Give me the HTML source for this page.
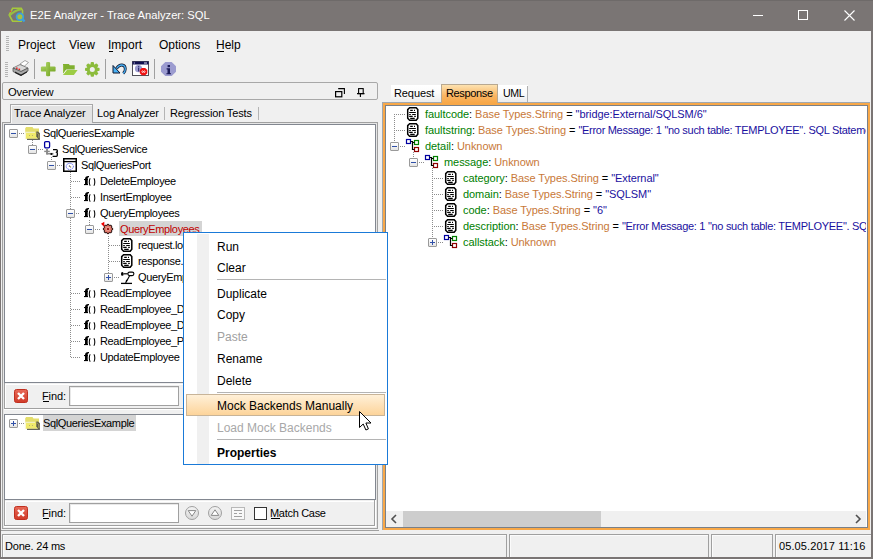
<!DOCTYPE html>
<html><head><meta charset="utf-8">
<style>
*{margin:0;padding:0;box-sizing:border-box}
html,body{width:873px;height:559px;overflow:hidden;background:#f0f0f0;font-family:"Liberation Sans",sans-serif;color:#000;position:relative}
.a{position:absolute}
.t{position:absolute;white-space:pre;line-height:1}
svg{position:absolute;overflow:visible}
.dh{position:absolute;height:1px;background:repeating-linear-gradient(to right,#8c8c8c 0 1px,transparent 1px 2px)}
.dv{position:absolute;width:1px;background:repeating-linear-gradient(to bottom,#8c8c8c 0 1px,transparent 1px 2px)}
.ex{position:absolute;width:9px;height:9px;border:1px solid #9a9a9a;border-radius:1px;background:linear-gradient(#ffffff,#e4e4e4)}
.ex:before{content:"";position:absolute;left:1px;top:3px;width:5px;height:1px;background:#3050a8}
.ex.p:after{content:"";position:absolute;left:3px;top:1px;width:1px;height:5px;background:#3050a8}
</style></head><body>

<div class="a" style="left:0px;top:0px;width:873px;height:31px;background:#7a7574"></div>
<div class="a" style="left:0px;top:0px;width:873px;height:1px;background:#6e6a69"></div>
<svg style="left:8px;top:7px;" width="18" height="16" viewBox="0 0 18 16"><path d="M4.6 1.3 H13.2 L14.5 3.5 V12 L13.2 14.2 H4.6 L1.2 8 Z" fill="none" stroke="#a6c83c" stroke-width="1.6"/>
<path d="M1.6 8.6 Q7 3 13 2.5" fill="none" stroke="#98c040" stroke-width="1.8"/>
<circle cx="2.5" cy="4.4" r="0.8" fill="#e04040"/>
<circle cx="11.9" cy="9.7" r="3.4" fill="#a8c040" stroke="#3aa0e0" stroke-width="1.7"/>
<path d="M14.3 12.1 L16.6 14.4" stroke="#3aa0e0" stroke-width="2.2"/></svg>
<div class="t" style="left:30px;top:10px;font-size:11.2px;color:#fff;letter-spacing:0px;">E2E Analyzer - Trace Analyzer: SQL</div>
<div class="a" style="left:753px;top:15px;width:10px;height:1px;background:#fff"></div>
<div class="a" style="left:798px;top:10px;width:10px;height:10px;border:1px solid #fff"></div>
<svg style="left:844px;top:10px;" width="11" height="11" viewBox="0 0 11 11"><path d="M0.5 0.5L10.5 10.5M10.5 0.5L0.5 10.5" stroke="#fff" stroke-width="1.1"/></svg>
<div class="a" style="left:0px;top:31px;width:1px;height:528px;background:#7a7574"></div>
<div class="a" style="left:871px;top:31px;width:2px;height:528px;background:#7a7574"></div>
<div class="a" style="left:0px;top:557px;width:873px;height:2px;background:#7a7574"></div>
<div class="a" style="left:6px;top:36px;width:3px;height:1px;background:#b4b4b4"></div>
<div class="a" style="left:6px;top:38px;width:3px;height:1px;background:#b4b4b4"></div>
<div class="a" style="left:6px;top:40px;width:3px;height:1px;background:#b4b4b4"></div>
<div class="a" style="left:6px;top:42px;width:3px;height:1px;background:#b4b4b4"></div>
<div class="a" style="left:6px;top:44px;width:3px;height:1px;background:#b4b4b4"></div>
<div class="a" style="left:6px;top:46px;width:3px;height:1px;background:#b4b4b4"></div>
<div class="a" style="left:6px;top:48px;width:3px;height:1px;background:#b4b4b4"></div>
<div class="a" style="left:6px;top:50px;width:3px;height:1px;background:#b4b4b4"></div>
<div class="t" style="left:18px;top:39px;font-size:12px;color:#000;letter-spacing:0px;">Project</div>
<div class="t" style="left:69px;top:39px;font-size:12px;color:#000;letter-spacing:0px;">View</div>
<div class="t" style="left:108px;top:39px;font-size:12px;color:#000;letter-spacing:0px;">Import</div>
<div class="t" style="left:159px;top:39px;font-size:12px;color:#000;letter-spacing:0px;">Options</div>
<div class="t" style="left:216px;top:39px;font-size:12px;color:#000;letter-spacing:0px;">Help</div>
<div class="a" style="left:109px;top:51px;width:4px;height:1px;background:#000"></div>
<div class="a" style="left:217px;top:51px;width:7px;height:1px;background:#000"></div>
<div class="a" style="left:5px;top:62px;width:3px;height:1px;background:#b4b4b4"></div>
<div class="a" style="left:5px;top:64px;width:3px;height:1px;background:#b4b4b4"></div>
<div class="a" style="left:5px;top:66px;width:3px;height:1px;background:#b4b4b4"></div>
<div class="a" style="left:5px;top:68px;width:3px;height:1px;background:#b4b4b4"></div>
<div class="a" style="left:5px;top:70px;width:3px;height:1px;background:#b4b4b4"></div>
<div class="a" style="left:5px;top:72px;width:3px;height:1px;background:#b4b4b4"></div>
<div class="a" style="left:5px;top:74px;width:3px;height:1px;background:#b4b4b4"></div>
<div class="a" style="left:5px;top:76px;width:3px;height:1px;background:#b4b4b4"></div>
<svg style="left:12px;top:60px;" width="17" height="17" viewBox="0 0 17 17"><path d="M8 4 L13 0.5 L16.5 2.5 L12 6.5 Z" fill="#fff" stroke="#909090" stroke-width="0.8"/>
<path d="M1 8 L8 4.5 L16 8 L9 11.5 Z" fill="#d8d8d8" stroke="#707070" stroke-width="0.8"/>
<path d="M1 8 L9 11.5 L16 8 L16 11 L9 15.5 L1 11.5 Z" fill="#a8a8a8" stroke="#505050" stroke-width="0.8"/>
<path d="M3 11.5 L9 14.5 L15 11.2 L15 12.5 L9 16 L3 13 Z" fill="#202020"/>
<rect x="4" y="7.5" width="1.6" height="1.4" fill="#e82020"/><rect x="6.5" y="8.6" width="1.6" height="1.4" fill="#e82020"/></svg>
<div class="a" style="left:34px;top:59px;width:1px;height:20px;background:#a0a0a0"></div>
<svg style="left:40px;top:62px;" width="16" height="15" viewBox="0 0 16 15"><defs><linearGradient id="gg" x1="0" y1="0" x2="1" y2="1"><stop offset="0" stop-color="#a8d060"/><stop offset="1" stop-color="#78a828"/></linearGradient></defs><rect x="0.9" y="4.4" width="14.7" height="5.2" rx="1.2" fill="url(#gg)"/><rect x="6" y="0" width="4.1" height="14.3" rx="1.2" fill="url(#gg)"/></svg>
<svg style="left:62px;top:63px;" width="17" height="13" viewBox="0 0 17 13"><path d="M1 1 H6.8 L7.8 2.3 H12.7 V6.5 H4.2 L1 10.8 Z" fill="#80b030"/><path d="M1.6 2 V10" stroke="#98c048" stroke-width="1"/><path d="M0.9 11.9 L4.6 7.1 H15.6 L11.9 11.9 Z" fill="#9ccc44"/><path d="M1.2 11.2 L4.4 7.2" stroke="#f4f8e8" stroke-width="0.8"/></svg>
<svg style="left:85px;top:62px;" width="15" height="15" viewBox="0 0 15 15"><g transform="translate(7.3 7.4)" fill="#8cbc3c"><rect x="-1.7" y="-7.3" width="3.4" height="14.6" rx="1"/><rect x="-1.7" y="-7.3" width="3.4" height="14.6" rx="1" transform="rotate(45)"/><rect x="-1.7" y="-7.3" width="3.4" height="14.6" rx="1" transform="rotate(90)"/><rect x="-1.7" y="-7.3" width="3.4" height="14.6" rx="1" transform="rotate(135)"/><circle r="5.5"/><circle r="2.5" fill="#f0f0f0"/></g></svg>
<div class="a" style="left:105px;top:59px;width:1px;height:20px;background:#a0a0a0"></div>
<svg style="left:112px;top:63px;" width="15" height="12" viewBox="0 0 15 12"><path d="M4.5 5.5 Q7 1.8 10 2 Q13.3 2.4 13.3 6 Q13.3 8.8 11.2 10.4" fill="none" stroke="#101830" stroke-width="2.8"/><path d="M4.5 5.5 Q7 1.8 10 2 Q13.3 2.4 13.3 6 Q13.3 8.8 11.2 10.4" fill="none" stroke="#48b0f4" stroke-width="1.3"/><path d="M1 2.5 L1 10 L8 10 Z" fill="#48b0f4" stroke="#101830" stroke-width="1"/></svg>
<svg style="left:132px;top:61px;" width="17" height="15" viewBox="0 0 17 15"><rect x="0.5" y="0.5" width="16" height="14" fill="#fff" stroke="#505058" stroke-width="1"/><rect x="0.5" y="0.5" width="16" height="3" fill="#101050"/><rect x="12" y="1.5" width="3" height="1" fill="#e0e0f0"/><rect x="1.8" y="1.5" width="1" height="1" fill="#e0e0f0"/><circle cx="6.5" cy="7.7" r="3.6" fill="#9c9cd0"/><rect x="6" y="5.2" width="1.2" height="1.1" fill="#303070"/><rect x="6" y="6.8" width="1.2" height="3.6" fill="#303070"/><path d="M7.8 9.1 L9.8 7 H13.2 L15.3 9.1 V12.3 L13.2 14.3 H9.8 L7.8 12.3 Z" fill="#f01010"/><path d="M9.7 10.7 Q10.6 9.2 11.5 10.7 Q12.4 12.2 13.3 10.7 Q12.4 9.2 11.5 10.7 Q10.6 12.2 9.7 10.7 Z" fill="none" stroke="#fff" stroke-width="0.9"/></svg>
<div class="a" style="left:154px;top:59px;width:1px;height:20px;background:#a0a0a0"></div>
<svg style="left:161px;top:62px;" width="15" height="14" viewBox="0 0 15 14"><path d="M4.3 0 H10.7 L15 4.2 V9.8 L10.7 14 H4.3 L0 9.8 V4.2 Z" fill="#9c9cd0"/><rect x="6.6" y="3" width="2.4" height="2.2" fill="#1c1c58"/><path d="M5.6 6.3 H9 V11.2 H10 V12.3 H5.4 V11.2 H6.5 V7.4 H5.6 Z" fill="#1c1c58"/></svg>
<div class="a" style="left:2px;top:82px;width:376px;height:18px;border:1px solid #a8a8a8;border-radius:2px;background:#f0f0f0"></div>
<div class="t" style="left:8px;top:87px;font-size:11.2px;color:#000;letter-spacing:-0.15px;">Overview</div>
<svg style="left:335px;top:88px;" width="11" height="10" viewBox="0 0 11 10"><rect x="0.6" y="3.6" width="6.2" height="5.2" fill="none" stroke="#000" stroke-width="1.2"/><path d="M3.2 0.6 H9.4 V5.9" fill="none" stroke="#000" stroke-width="1.1"/></svg>
<svg style="left:357px;top:88px;" width="8" height="10" viewBox="0 0 8 10"><rect x="1.6" y="0.6" width="4.6" height="5" fill="none" stroke="#000" stroke-width="1.1"/><path d="M0 5.6 H7.5 M3.4 5.6 V9" stroke="#000" stroke-width="1.1"/></svg>
<div class="t" style="left:97px;top:108px;font-size:11px;color:#000;letter-spacing:-0.15px;">Log Analyzer</div>
<div class="a" style="left:164px;top:107px;width:1px;height:13px;background:#b4b4b4"></div>
<div class="t" style="left:170px;top:108px;font-size:11px;color:#000;letter-spacing:-0.15px;">Regression Tests</div>
<div class="a" style="left:258px;top:107px;width:1px;height:13px;background:#b4b4b4"></div>
<div class="a" style="left:2px;top:122px;width:376px;height:407px;border:1px solid #a0a0a0;border-bottom:none"></div>
<div class="a" style="left:3px;top:123px;width:374px;height:405px;border:1px solid #e6e6e6;border-bottom:none"></div>
<div class="a" style="left:10px;top:104px;width:83px;height:19px;background:#e3e3e3;border:1px solid #a8a8a8;border-bottom:none;box-shadow:inset 1px 1px 0 #f8f8f8"></div>
<div class="t" style="left:14px;top:108px;font-size:11px;color:#000;letter-spacing:-0.1px;">Trace Analyzer</div>
<div class="a" style="left:4px;top:124px;width:372px;height:259px;border:1px solid #828790;background:#fff"></div>
<div class="ex" style="left:9px;top:129px"></div>
<div class="dh" style="left:19px;top:133px;width:5px"></div>
<svg style="left:24px;top:127px;" width="16" height="13" viewBox="0 0 16 13"><path d="M1.2 1.2 L2.2 0 H8.5 L9.5 1.4 H15 V6 H1.2 Z" fill="#e4de6c"/><path d="M1.6 5.7 H15.2 V11.8 H1.6 Z" fill="#f0ea6c"/><rect x="1.2" y="4.8" width="9.8" height="0.9" fill="#f6f6e4"/><path d="M1.3 5.5 V11" stroke="#fafae0" stroke-width="0.8"/><path d="M12.3 4.4 H14 L15.9 6.2 V11.9 H14.2 L12.3 9.6 Z" fill="#5e5c4c"/><path d="M13.2 6 L14.8 7.6 V11" stroke="#d8d070" stroke-width="0.6" fill="none"/><rect x="3" y="11.8" width="12.9" height="1.1" fill="#55554a"/><path d="M5 8.5 h1 M8 8.5 h1" stroke="#b8b070" stroke-width="1"/></svg>
<div class="t" style="left:43px;top:128px;font-size:11px;letter-spacing:-0.35px;color:#000">SqlQueriesExample</div>
<div class="dv" style="left:32px;top:140px;height:5px"></div>
<div class="ex" style="left:28px;top:145px"></div>
<div class="dh" style="left:38px;top:149px;width:5px"></div>
<svg style="left:43px;top:141px;" width="16" height="17" viewBox="0 0 16 17"><rect x="1.6" y="0.6" width="5" height="6.2" rx="1.2" fill="none" stroke="#0000a0" stroke-width="1.3"/><path d="M1.2 10.4 H6.8" stroke="#8a8a8a" stroke-width="1.4"/><path d="M4 8 V13.5" stroke="#8a8a8a" stroke-width="1.9"/><path d="M3.5 12.7 H10.5" stroke="#8a8a8a" stroke-width="1.6"/><circle cx="8.4" cy="13" r="1.1" fill="#000"/><path d="M10 8.6 H13.3 Q14.3 8.6 14.3 9.6 V10.6 L13.5 11.2 L14.3 11.8 V14.3 Q14.3 15.3 13.3 15.3 H9.6" stroke="#000" stroke-width="1.3" fill="none"/></svg>
<div class="t" style="left:62px;top:144px;font-size:11px;letter-spacing:-0.35px;color:#000">SqlQueriesService</div>
<div class="dv" style="left:51px;top:157px;height:4px"></div>
<div class="ex" style="left:47px;top:161px"></div>
<div class="dh" style="left:57px;top:165px;width:5px"></div>
<svg style="left:63px;top:158px;" width="14" height="14" viewBox="0 0 14 14"><rect x="0.75" y="0.75" width="12.5" height="12.5" fill="#fff" stroke="#000" stroke-width="1.5"/><path d="M1 3.6 H13" stroke="#000" stroke-width="1.3"/><ellipse cx="6.8" cy="8.4" rx="3.6" ry="3.1" fill="none" stroke="#4858f0" stroke-width="1" stroke-dasharray="1.2 0.8"/><circle cx="6.4" cy="8" r="0.6" fill="#000"/><circle cx="7.6" cy="8.9" r="0.6" fill="#707030"/></svg>
<div class="t" style="left:81px;top:160px;font-size:11px;letter-spacing:-0.35px;color:#000">SqlQueriesPort</div>
<div class="dv" style="left:70px;top:172px;height:186px"></div>
<div class="dh" style="left:71px;top:181px;width:9px"></div>
<svg style="left:84px;top:176px;" width="12" height="10" viewBox="0 0 12 10"><path d="M1 9 V3 Q1 0 4.5 0 H5 V1.2 H4.3 Q3.7 1.2 3.7 3 V9 Z" fill="#000"/><rect x="0" y="3" width="3.8" height="1.1" fill="#000"/><rect x="0" y="8" width="4" height="1.1" fill="#000"/><path d="M6.2 2.3 Q5.3 3.5 5.3 6 Q5.3 8.5 6.2 9.7 M9.9 2.3 Q10.8 3.5 10.8 6 Q10.8 8.5 9.9 9.7" fill="none" stroke="#000" stroke-width="1.05"/></svg>
<div class="t" style="left:100px;top:176px;font-size:11px;letter-spacing:-0.35px;color:#000">DeleteEmployee</div>
<div class="dh" style="left:71px;top:197px;width:9px"></div>
<svg style="left:84px;top:192px;" width="12" height="10" viewBox="0 0 12 10"><path d="M1 9 V3 Q1 0 4.5 0 H5 V1.2 H4.3 Q3.7 1.2 3.7 3 V9 Z" fill="#000"/><rect x="0" y="3" width="3.8" height="1.1" fill="#000"/><rect x="0" y="8" width="4" height="1.1" fill="#000"/><path d="M6.2 2.3 Q5.3 3.5 5.3 6 Q5.3 8.5 6.2 9.7 M9.9 2.3 Q10.8 3.5 10.8 6 Q10.8 8.5 9.9 9.7" fill="none" stroke="#000" stroke-width="1.05"/></svg>
<div class="t" style="left:100px;top:192px;font-size:11px;letter-spacing:-0.35px;color:#000">InsertEmployee</div>
<div class="ex" style="left:66px;top:209px"></div>
<div class="dh" style="left:76px;top:213px;width:4px"></div>
<svg style="left:84px;top:208px;" width="12" height="10" viewBox="0 0 12 10"><path d="M1 9 V3 Q1 0 4.5 0 H5 V1.2 H4.3 Q3.7 1.2 3.7 3 V9 Z" fill="#000"/><rect x="0" y="3" width="3.8" height="1.1" fill="#000"/><rect x="0" y="8" width="4" height="1.1" fill="#000"/><path d="M6.2 2.3 Q5.3 3.5 5.3 6 Q5.3 8.5 6.2 9.7 M9.9 2.3 Q10.8 3.5 10.8 6 Q10.8 8.5 9.9 9.7" fill="none" stroke="#000" stroke-width="1.05"/></svg>
<div class="t" style="left:100px;top:208px;font-size:11px;letter-spacing:-0.35px;color:#000">QueryEmployees</div>
<div class="dv" style="left:89px;top:220px;height:5px"></div>
<div class="ex" style="left:85px;top:225px"></div>
<div class="dh" style="left:95px;top:229px;width:5px"></div>
<div class="a" style="left:119px;top:221px;width:83px;height:15px;background:#d4d4d4"></div>
<svg style="left:101px;top:221px;" width="13" height="14" viewBox="0 0 13 14"><g transform="translate(7 8)"><g fill="#1a0808"><rect x="-1.2" y="-5.1" width="2.4" height="10.2"/><rect x="-1.2" y="-5.1" width="2.4" height="10.2" transform="rotate(45)"/><rect x="-1.2" y="-5.1" width="2.4" height="10.2" transform="rotate(90)"/><rect x="-1.2" y="-5.1" width="2.4" height="10.2" transform="rotate(135)"/></g><circle r="4.3" fill="#1a0808"/><circle r="3.5" fill="#e0786a"/><g fill="#e0786a"><rect x="-0.6" y="-4.3" width="1.2" height="8.6"/><rect x="-0.6" y="-4.3" width="1.2" height="8.6" transform="rotate(45)"/><rect x="-0.6" y="-4.3" width="1.2" height="8.6" transform="rotate(90)"/><rect x="-0.6" y="-4.3" width="1.2" height="8.6" transform="rotate(135)"/></g><circle r="2.2" fill="#e8988a"/><circle r="1.1" fill="#900000"/></g><path d="M0 2.8 L3.3 0.7 L3.3 6 Z" fill="#f00000"/></svg>
<div class="t" style="left:120px;top:224px;font-size:11px;letter-spacing:-0.35px;color:#c00000">QueryEmployees</div>
<div class="dv" style="left:108px;top:236px;height:37px"></div>
<div class="dh" style="left:109px;top:245px;width:11px"></div>
<svg style="left:121px;top:238px;" width="12" height="14" viewBox="0 0 12 14"><path d="M2.6 0.8 H9.2 L10.8 2.6 V11.3 L9.2 13.2 H2.6 L0.7 11.3 V2.6 Z" fill="#fff" stroke="#000" stroke-width="1.5"/><path d="M3.2 3.4 H5.8 M7 3.4 H8 M2.2 5.5 H8.8 M2.2 7.5 H3.8 M5.2 7.5 H8.8 M2.2 9.45 H5.7 M7.2 9.45 H8.8 M3.2 11.4 H7.7" stroke="#000" stroke-width="1.2"/></svg>
<div class="t" style="left:138px;top:240px;font-size:11px;letter-spacing:-0.35px;color:#000">request.log</div>
<div class="dh" style="left:109px;top:261px;width:11px"></div>
<svg style="left:121px;top:254px;" width="12" height="14" viewBox="0 0 12 14"><path d="M2.6 0.8 H9.2 L10.8 2.6 V11.3 L9.2 13.2 H2.6 L0.7 11.3 V2.6 Z" fill="#fff" stroke="#000" stroke-width="1.5"/><path d="M3.2 3.4 H5.8 M7 3.4 H8 M2.2 5.5 H8.8 M2.2 7.5 H3.8 M5.2 7.5 H8.8 M2.2 9.45 H5.7 M7.2 9.45 H8.8 M3.2 11.4 H7.7" stroke="#000" stroke-width="1.2"/></svg>
<div class="t" style="left:138px;top:256px;font-size:11px;letter-spacing:-0.35px;color:#000">response.log</div>
<div class="ex p" style="left:104px;top:273px"></div>
<div class="dh" style="left:114px;top:277px;width:6px"></div>
<svg style="left:121px;top:271px;" width="14" height="14" viewBox="0 0 14 14"><ellipse cx="1.3" cy="2.9" rx="1.3" ry="1.9" fill="#000"/><path d="M2.5 2.8 H6.8" stroke="#000" stroke-width="1.2"/><rect x="6.9" y="1.1" width="6" height="3.5" rx="1.75" fill="none" stroke="#000" stroke-width="1.1"/><path d="M8.6 4.7 L4.6 12" stroke="#000" stroke-width="1.1"/><path d="M4.3 10.6 L5.6 8.4 L6.6 9.9 Z" fill="#000"/><path d="M0 12.4 H11" stroke="#000" stroke-width="1.3"/></svg>
<div class="t" style="left:138px;top:272px;font-size:11px;letter-spacing:-0.35px;color:#000">QueryEmployees_1</div>
<div class="dh" style="left:71px;top:293px;width:9px"></div>
<svg style="left:84px;top:288px;" width="12" height="10" viewBox="0 0 12 10"><path d="M1 9 V3 Q1 0 4.5 0 H5 V1.2 H4.3 Q3.7 1.2 3.7 3 V9 Z" fill="#000"/><rect x="0" y="3" width="3.8" height="1.1" fill="#000"/><rect x="0" y="8" width="4" height="1.1" fill="#000"/><path d="M6.2 2.3 Q5.3 3.5 5.3 6 Q5.3 8.5 6.2 9.7 M9.9 2.3 Q10.8 3.5 10.8 6 Q10.8 8.5 9.9 9.7" fill="none" stroke="#000" stroke-width="1.05"/></svg>
<div class="t" style="left:100px;top:288px;font-size:11px;letter-spacing:-0.35px;color:#000">ReadEmployee</div>
<div class="dh" style="left:71px;top:309px;width:9px"></div>
<svg style="left:84px;top:304px;" width="12" height="10" viewBox="0 0 12 10"><path d="M1 9 V3 Q1 0 4.5 0 H5 V1.2 H4.3 Q3.7 1.2 3.7 3 V9 Z" fill="#000"/><rect x="0" y="3" width="3.8" height="1.1" fill="#000"/><rect x="0" y="8" width="4" height="1.1" fill="#000"/><path d="M6.2 2.3 Q5.3 3.5 5.3 6 Q5.3 8.5 6.2 9.7 M9.9 2.3 Q10.8 3.5 10.8 6 Q10.8 8.5 9.9 9.7" fill="none" stroke="#000" stroke-width="1.05"/></svg>
<div class="t" style="left:100px;top:304px;font-size:11px;letter-spacing:-0.35px;color:#000">ReadEmployee_Department</div>
<div class="dh" style="left:71px;top:325px;width:9px"></div>
<svg style="left:84px;top:320px;" width="12" height="10" viewBox="0 0 12 10"><path d="M1 9 V3 Q1 0 4.5 0 H5 V1.2 H4.3 Q3.7 1.2 3.7 3 V9 Z" fill="#000"/><rect x="0" y="3" width="3.8" height="1.1" fill="#000"/><rect x="0" y="8" width="4" height="1.1" fill="#000"/><path d="M6.2 2.3 Q5.3 3.5 5.3 6 Q5.3 8.5 6.2 9.7 M9.9 2.3 Q10.8 3.5 10.8 6 Q10.8 8.5 9.9 9.7" fill="none" stroke="#000" stroke-width="1.05"/></svg>
<div class="t" style="left:100px;top:320px;font-size:11px;letter-spacing:-0.35px;color:#000">ReadEmployee_Details</div>
<div class="dh" style="left:71px;top:341px;width:9px"></div>
<svg style="left:84px;top:336px;" width="12" height="10" viewBox="0 0 12 10"><path d="M1 9 V3 Q1 0 4.5 0 H5 V1.2 H4.3 Q3.7 1.2 3.7 3 V9 Z" fill="#000"/><rect x="0" y="3" width="3.8" height="1.1" fill="#000"/><rect x="0" y="8" width="4" height="1.1" fill="#000"/><path d="M6.2 2.3 Q5.3 3.5 5.3 6 Q5.3 8.5 6.2 9.7 M9.9 2.3 Q10.8 3.5 10.8 6 Q10.8 8.5 9.9 9.7" fill="none" stroke="#000" stroke-width="1.05"/></svg>
<div class="t" style="left:100px;top:336px;font-size:11px;letter-spacing:-0.35px;color:#000">ReadEmployee_Phone</div>
<div class="dh" style="left:71px;top:357px;width:9px"></div>
<svg style="left:84px;top:352px;" width="12" height="10" viewBox="0 0 12 10"><path d="M1 9 V3 Q1 0 4.5 0 H5 V1.2 H4.3 Q3.7 1.2 3.7 3 V9 Z" fill="#000"/><rect x="0" y="3" width="3.8" height="1.1" fill="#000"/><rect x="0" y="8" width="4" height="1.1" fill="#000"/><path d="M6.2 2.3 Q5.3 3.5 5.3 6 Q5.3 8.5 6.2 9.7 M9.9 2.3 Q10.8 3.5 10.8 6 Q10.8 8.5 9.9 9.7" fill="none" stroke="#000" stroke-width="1.05"/></svg>
<div class="t" style="left:100px;top:352px;font-size:11px;letter-spacing:-0.35px;color:#000">UpdateEmployee</div>
<div class="a" style="left:4px;top:383px;width:1px;height:26px;background:#a0a0a0"></div>
<div class="a" style="left:4px;top:408px;width:372px;height:1px;background:#a0a0a0"></div>
<div class="a" style="left:5px;top:384px;width:1px;height:24px;background:#fff"></div>
<div class="a" style="left:5px;top:384px;width:370px;height:1px;background:#fff"></div>
<div class="a" style="left:4px;top:409px;width:373px;height:1px;background:#fff"></div>
<svg style="left:14px;top:389px;" width="14" height="14" viewBox="0 0 14 14"><defs><linearGradient id="rg389" x1="0" y1="0" x2="0" y2="1"><stop offset="0" stop-color="#e86a58"/><stop offset="1" stop-color="#d03a28"/></linearGradient></defs><rect x="0.5" y="0.5" width="13" height="13" rx="2" fill="url(#rg389)" stroke="#c03020"/><path d="M4 4 L10 10 M10 4 L4 10" stroke="#fff" stroke-width="2.4"/></svg>
<div class="t" style="left:42px;top:391px;font-size:11px;color:#000;letter-spacing:-0.1px;">Find:</div>
<div class="a" style="left:43px;top:401px;width:6px;height:1px;background:#000"></div>
<div class="a" style="left:69px;top:386px;width:110px;height:20px;background:#fff;border:1px solid #a0a0a0;box-shadow:inset 1px 1px 0 #e8e8e8"></div>
<div class="a" style="left:4px;top:414px;width:372px;height:86px;border:1px solid #828790;background:#fff"></div>
<div class="ex p" style="left:9px;top:419px"></div>
<div class="dh" style="left:19px;top:423px;width:5px"></div>
<svg style="left:24px;top:417px;" width="16" height="13" viewBox="0 0 16 13"><path d="M1.2 1.2 L2.2 0 H8.5 L9.5 1.4 H15 V6 H1.2 Z" fill="#e4de6c"/><path d="M1.6 5.7 H15.2 V11.8 H1.6 Z" fill="#f0ea6c"/><rect x="1.2" y="4.8" width="9.8" height="0.9" fill="#f6f6e4"/><path d="M1.3 5.5 V11" stroke="#fafae0" stroke-width="0.8"/><path d="M12.3 4.4 H14 L15.9 6.2 V11.9 H14.2 L12.3 9.6 Z" fill="#5e5c4c"/><path d="M13.2 6 L14.8 7.6 V11" stroke="#d8d070" stroke-width="0.6" fill="none"/><rect x="3" y="11.8" width="12.9" height="1.1" fill="#55554a"/><path d="M5 8.5 h1 M8 8.5 h1" stroke="#b8b070" stroke-width="1"/></svg>
<div class="a" style="left:43px;top:415px;width:93px;height:16px;background:#d4d4d4"></div>
<div class="t" style="left:43px;top:418px;font-size:11px;letter-spacing:-0.35px;color:#000">SqlQueriesExample</div>
<div class="a" style="left:4px;top:500px;width:1px;height:26px;background:#a0a0a0"></div>
<div class="a" style="left:4px;top:525px;width:371px;height:1px;background:#a0a0a0"></div>
<div class="a" style="left:374px;top:500px;width:1px;height:26px;background:#a0a0a0"></div>
<div class="a" style="left:5px;top:501px;width:1px;height:24px;background:#fff"></div>
<div class="a" style="left:5px;top:501px;width:369px;height:1px;background:#fff"></div>
<div class="a" style="left:4px;top:526px;width:372px;height:1px;background:#fff"></div>
<div class="a" style="left:375px;top:500px;width:1px;height:27px;background:#fff"></div>
<svg style="left:14px;top:506px;" width="14" height="14" viewBox="0 0 14 14"><defs><linearGradient id="rg506" x1="0" y1="0" x2="0" y2="1"><stop offset="0" stop-color="#e86a58"/><stop offset="1" stop-color="#d03a28"/></linearGradient></defs><rect x="0.5" y="0.5" width="13" height="13" rx="2" fill="url(#rg506)" stroke="#c03020"/><path d="M4 4 L10 10 M10 4 L4 10" stroke="#fff" stroke-width="2.4"/></svg>
<div class="t" style="left:42px;top:508px;font-size:11px;color:#000;letter-spacing:-0.1px;">Find:</div>
<div class="a" style="left:43px;top:518px;width:6px;height:1px;background:#000"></div>
<div class="a" style="left:69px;top:503px;width:110px;height:20px;background:#fff;border:1px solid #a0a0a0;box-shadow:inset 1px 1px 0 #e8e8e8"></div>
<svg style="left:185px;top:506px;" width="14" height="14" viewBox="0 0 14 14"><defs><linearGradient id="cg" x1="0" y1="0" x2="0" y2="1"><stop offset="0" stop-color="#f4f4f4"/><stop offset="1" stop-color="#d8d8d8"/></linearGradient></defs><circle cx="7" cy="7" r="6.5" fill="url(#cg)" stroke="#a0a0a0"/><path d="M3.2 4.6 H10.8 L7 10.2 Z" fill="#fff" stroke="#8a8a8a" stroke-width="1"/></svg>
<svg style="left:208px;top:506px;" width="14" height="14" viewBox="0 0 14 14"><circle cx="7" cy="7" r="6.5" fill="url(#cg)" stroke="#a0a0a0"/><path d="M3.2 9.4 H10.8 L7 3.8 Z" fill="#fff" stroke="#8a8a8a" stroke-width="1"/></svg>
<svg style="left:231px;top:507px;" width="14" height="13" viewBox="0 0 14 13"><rect x="0.5" y="0.5" width="13" height="12" fill="#f8f8f8" stroke="#b8b8b8"/><path d="M3 3.5 H11 M3 6.5 H6 M8 6.5 H11 M3 9.5 H11" stroke="#a0a0a0"/></svg>
<div class="a" style="left:254px;top:507px;width:13px;height:13px;background:#fff;border:1px solid #333"></div>
<div class="t" style="left:270px;top:508px;font-size:11px;color:#000;letter-spacing:-0.3px;">Match Case</div>
<div class="a" style="left:271px;top:518px;width:9px;height:1px;background:#000"></div>
<div class="a" style="left:2px;top:528px;width:376px;height:1px;background:#a0a0a0"></div>
<div class="a" style="left:1px;top:530px;width:378px;height:1px;background:#a0a0a0"></div>
<div class="a" style="left:391px;top:85px;width:50px;height:17px;background:linear-gradient(#ffffff 0%,#fcfcfc 45%,#ececec 100%)"></div>
<div class="a" style="left:498px;top:85px;width:30px;height:17px;background:linear-gradient(#ffffff 0%,#fcfcfc 45%,#ececec 100%)"></div>
<div class="t" style="left:394px;top:88px;font-size:11px;color:#000;letter-spacing:-0.1px;">Request</div>
<div class="t" style="left:503px;top:88px;font-size:10.6px;color:#000;letter-spacing:-0.35px;">UML</div>
<div class="a" style="left:527px;top:86px;width:1px;height:16px;background:#b0b0b0"></div>
<div class="a" style="left:382px;top:102px;width:488px;height:428px;background:#f8a848;border-left:1px solid #a0a8b0;border-top:1px solid #a0a8b0"></div>
<div class="a" style="left:385px;top:105px;width:483px;height:423px;background:#fff;border:1px solid #7a8088"></div>
<div class="a" style="left:441px;top:84px;width:57px;height:19px;background:linear-gradient(#fde2b0,#f9b462 60%,#f8a848);border:1px solid #b8a890;border-bottom:none"></div>
<div class="t" style="left:446px;top:88px;font-size:11px;color:#000;letter-spacing:-0.35px;">Response</div>
<div class="a" style="left:386px;top:511px;width:480px;height:16px;background:#f0f0f0"></div>
<svg style="left:390px;top:514px;" width="8" height="10" viewBox="0 0 8 10"><path d="M6 1 L2 5 L6 9" fill="none" stroke="#505050" stroke-width="1.6"/></svg>
<div class="a" style="left:403px;top:511px;width:198px;height:16px;background:#cdcdcd"></div>
<svg style="left:854px;top:514px;" width="8" height="10" viewBox="0 0 8 10"><path d="M2 1 L6 5 L2 9" fill="none" stroke="#505050" stroke-width="1.6"/></svg>
<div class="a" style="left:386px;top:106px;width:480px;height:405px;overflow:hidden">
<div class="dv" style="left:8px;top:8px;height:27px"></div>
<div class="dh" style="left:8px;top:8px;width:11px"></div>
<svg style="left:21px;top:1px" width="12" height="14" viewBox="0 0 12 14"><path d="M2.6 0.8 H9.2 L10.8 2.6 V11.3 L9.2 13.2 H2.6 L0.7 11.3 V2.6 Z" fill="#fff" stroke="#000" stroke-width="1.5"/><path d="M3.2 3.4 H5.8 M7 3.4 H8 M2.2 5.5 H8.8 M2.2 7.5 H3.8 M5.2 7.5 H8.8 M2.2 9.45 H5.7 M7.2 9.45 H8.8 M3.2 11.4 H7.7" stroke="#000" stroke-width="1.2"/></svg>
<div class="t" style="left:39px;top:3px;font-size:11px;letter-spacing:-0.06px"><span style="color:#008000">faultcode</span><span style="color:#000">: </span><span style="color:#c87838">Base Types.String</span><span style="color:#000"> = </span><span style="color:#1a10a0">"bridge:External/SQLSM/6"</span></div>
<div class="dh" style="left:8px;top:24px;width:11px"></div>
<svg style="left:21px;top:17px" width="12" height="14" viewBox="0 0 12 14"><path d="M2.6 0.8 H9.2 L10.8 2.6 V11.3 L9.2 13.2 H2.6 L0.7 11.3 V2.6 Z" fill="#fff" stroke="#000" stroke-width="1.5"/><path d="M3.2 3.4 H5.8 M7 3.4 H8 M2.2 5.5 H8.8 M2.2 7.5 H3.8 M5.2 7.5 H8.8 M2.2 9.45 H5.7 M7.2 9.45 H8.8 M3.2 11.4 H7.7" stroke="#000" stroke-width="1.2"/></svg>
<div class="t" style="left:39px;top:19px;font-size:11px;letter-spacing:-0.06px"><span style="color:#008000">faultstring</span><span style="color:#000">: </span><span style="color:#c87838">Base Types.String</span><span style="color:#000"> = </span><span style="color:#1a10a0;letter-spacing:-0.3px">"Error Message: 1 "no such table: TEMPLOYEE". SQL Statement: SELECT</span></div>
<div class="ex" style="left:4px;top:36px"></div>
<div class="dh" style="left:14px;top:40px;width:5px"></div>
<svg style="left:20px;top:33px" width="14" height="14" viewBox="0 0 14 14"><rect x="0.5" y="0.5" width="4" height="4" fill="none" stroke="#0000a0" stroke-width="1.2"/><rect x="8.5" y="1.5" width="4" height="4" fill="none" stroke="#008000" stroke-width="1.2"/><rect x="8.5" y="8.5" width="4" height="4" fill="none" stroke="#900000" stroke-width="1.2"/><path d="M4.5 2.5 H6.5 V10.5 H8.5 M6.5 3.5 H8.5" fill="none" stroke="#000" stroke-width="1.2"/></svg>
<div class="t" style="left:39px;top:35px;font-size:11px;letter-spacing:-0.06px"><span style="color:#008000">detail</span><span style="color:#000">: </span><span style="color:#c87838">Unknown</span></div>
<div class="dv" style="left:27px;top:46px;height:6px"></div>
<div class="ex" style="left:23px;top:52px"></div>
<div class="dh" style="left:33px;top:56px;width:5px"></div>
<svg style="left:39px;top:49px" width="14" height="14" viewBox="0 0 14 14"><rect x="0.5" y="0.5" width="4" height="4" fill="none" stroke="#0000a0" stroke-width="1.2"/><rect x="8.5" y="1.5" width="4" height="4" fill="none" stroke="#008000" stroke-width="1.2"/><rect x="8.5" y="8.5" width="4" height="4" fill="none" stroke="#900000" stroke-width="1.2"/><path d="M4.5 2.5 H6.5 V10.5 H8.5 M6.5 3.5 H8.5" fill="none" stroke="#000" stroke-width="1.2"/></svg>
<div class="t" style="left:58px;top:51px;font-size:11px;letter-spacing:-0.06px"><span style="color:#008000">message</span><span style="color:#000">: </span><span style="color:#c87838">Unknown</span></div>
<div class="dv" style="left:46px;top:62px;height:73px"></div>
<div class="dh" style="left:46px;top:72px;width:11px"></div>
<svg style="left:59px;top:65px" width="12" height="14" viewBox="0 0 12 14"><path d="M2.6 0.8 H9.2 L10.8 2.6 V11.3 L9.2 13.2 H2.6 L0.7 11.3 V2.6 Z" fill="#fff" stroke="#000" stroke-width="1.5"/><path d="M3.2 3.4 H5.8 M7 3.4 H8 M2.2 5.5 H8.8 M2.2 7.5 H3.8 M5.2 7.5 H8.8 M2.2 9.45 H5.7 M7.2 9.45 H8.8 M3.2 11.4 H7.7" stroke="#000" stroke-width="1.2"/></svg>
<div class="t" style="left:77px;top:67px;font-size:11px;letter-spacing:-0.06px"><span style="color:#008000">category</span><span style="color:#000">: </span><span style="color:#c87838">Base Types.String</span><span style="color:#000"> = </span><span style="color:#1a10a0">"External"</span></div>
<div class="dh" style="left:46px;top:88px;width:11px"></div>
<svg style="left:59px;top:81px" width="12" height="14" viewBox="0 0 12 14"><path d="M2.6 0.8 H9.2 L10.8 2.6 V11.3 L9.2 13.2 H2.6 L0.7 11.3 V2.6 Z" fill="#fff" stroke="#000" stroke-width="1.5"/><path d="M3.2 3.4 H5.8 M7 3.4 H8 M2.2 5.5 H8.8 M2.2 7.5 H3.8 M5.2 7.5 H8.8 M2.2 9.45 H5.7 M7.2 9.45 H8.8 M3.2 11.4 H7.7" stroke="#000" stroke-width="1.2"/></svg>
<div class="t" style="left:77px;top:83px;font-size:11px;letter-spacing:-0.06px"><span style="color:#008000">domain</span><span style="color:#000">: </span><span style="color:#c87838">Base Types.String</span><span style="color:#000"> = </span><span style="color:#1a10a0">"SQLSM"</span></div>
<div class="dh" style="left:46px;top:104px;width:11px"></div>
<svg style="left:59px;top:97px" width="12" height="14" viewBox="0 0 12 14"><path d="M2.6 0.8 H9.2 L10.8 2.6 V11.3 L9.2 13.2 H2.6 L0.7 11.3 V2.6 Z" fill="#fff" stroke="#000" stroke-width="1.5"/><path d="M3.2 3.4 H5.8 M7 3.4 H8 M2.2 5.5 H8.8 M2.2 7.5 H3.8 M5.2 7.5 H8.8 M2.2 9.45 H5.7 M7.2 9.45 H8.8 M3.2 11.4 H7.7" stroke="#000" stroke-width="1.2"/></svg>
<div class="t" style="left:77px;top:99px;font-size:11px;letter-spacing:-0.06px"><span style="color:#008000">code</span><span style="color:#000">: </span><span style="color:#c87838">Base Types.String</span><span style="color:#000"> = </span><span style="color:#1a10a0">"6"</span></div>
<div class="dh" style="left:46px;top:120px;width:11px"></div>
<svg style="left:59px;top:113px" width="12" height="14" viewBox="0 0 12 14"><path d="M2.6 0.8 H9.2 L10.8 2.6 V11.3 L9.2 13.2 H2.6 L0.7 11.3 V2.6 Z" fill="#fff" stroke="#000" stroke-width="1.5"/><path d="M3.2 3.4 H5.8 M7 3.4 H8 M2.2 5.5 H8.8 M2.2 7.5 H3.8 M5.2 7.5 H8.8 M2.2 9.45 H5.7 M7.2 9.45 H8.8 M3.2 11.4 H7.7" stroke="#000" stroke-width="1.2"/></svg>
<div class="t" style="left:77px;top:115px;font-size:11px;letter-spacing:-0.06px"><span style="color:#008000">description</span><span style="color:#000">: </span><span style="color:#c87838">Base Types.String</span><span style="color:#000"> = </span><span style="color:#1a10a0;letter-spacing:-0.3px">"Error Message: 1 "no such table: TEMPLOYEE". SQL Statement</span></div>
<div class="ex p" style="left:42px;top:132px"></div>
<div class="dh" style="left:52px;top:136px;width:5px"></div>
<svg style="left:58px;top:129px" width="14" height="14" viewBox="0 0 14 14"><rect x="0.5" y="0.5" width="4" height="4" fill="none" stroke="#0000a0" stroke-width="1.2"/><rect x="8.5" y="1.5" width="4" height="4" fill="none" stroke="#008000" stroke-width="1.2"/><rect x="8.5" y="8.5" width="4" height="4" fill="none" stroke="#900000" stroke-width="1.2"/><path d="M4.5 2.5 H6.5 V10.5 H8.5 M6.5 3.5 H8.5" fill="none" stroke="#000" stroke-width="1.2"/></svg>
<div class="t" style="left:77px;top:131px;font-size:11px;letter-spacing:-0.06px"><span style="color:#008000">callstack</span><span style="color:#000">: </span><span style="color:#c87838">Unknown</span></div>
</div>
<div class="a" style="left:2px;top:534px;width:505px;height:23px;border:1px solid #a0a0a0;border-bottom:none;box-shadow:inset 1px 1px 0 #fbfbfb"></div>
<div class="a" style="left:509px;top:534px;width:200px;height:23px;border:1px solid #a0a0a0;border-bottom:none;box-shadow:inset 1px 1px 0 #fbfbfb"></div>
<div class="a" style="left:711px;top:534px;width:62px;height:23px;border:1px solid #a0a0a0;border-bottom:none;box-shadow:inset 1px 1px 0 #fbfbfb"></div>
<div class="a" style="left:775px;top:534px;width:96px;height:23px;border:1px solid #a0a0a0;border-bottom:none;border-right:none;box-shadow:inset 1px 1px 0 #fbfbfb"></div>
<div class="t" style="left:5px;top:541px;font-size:11px;color:#000;letter-spacing:-0.2px;">Done. 24 ms</div>
<div class="t" style="left:779px;top:541px;font-size:11px;color:#000;letter-spacing:0.1px;">05.05.2017 11:16</div>
<div class="a" style="left:183px;top:232px;width:205px;height:233px;background:#fff;border:1px solid #1a7ad8"></div>
<div class="a" style="left:197px;top:234px;width:12px;height:230px;background:#f0f0f0"></div>
<div class="t" style="left:217px;top:241px;font-size:12px;color:#000;">Run</div>
<div class="t" style="left:217px;top:262px;font-size:12px;color:#000;">Clear</div>
<div class="a" style="left:217px;top:279px;width:169px;height:1px;background:#b4b4b4"></div>
<div class="t" style="left:217px;top:288px;font-size:12px;color:#000;">Duplicate</div>
<div class="t" style="left:217px;top:309px;font-size:12px;color:#000;">Copy</div>
<div class="t" style="left:217px;top:331px;font-size:12px;color:#a0a0a0;">Paste</div>
<div class="t" style="left:217px;top:353px;font-size:12px;color:#000;">Rename</div>
<div class="t" style="left:217px;top:375px;font-size:12px;color:#000;">Delete</div>
<div class="a" style="left:217px;top:392px;width:169px;height:1px;background:#b4b4b4"></div>
<div class="a" style="left:186px;top:394px;width:199px;height:22px;background:linear-gradient(#fff0d8,#fdd49a);border:1px solid #c8b498"></div>
<div class="t" style="left:217px;top:400px;font-size:12px;color:#000;">Mock Backends Manually</div>
<div class="t" style="left:217px;top:422px;font-size:12px;color:#a8a8a8;">Load Mock Backends</div>
<div class="a" style="left:217px;top:439px;width:169px;height:1px;background:#b4b4b4"></div>
<div class="t" style="left:217px;top:447px;font-size:12px;color:#000;font-weight:bold;">Properties</div>
<svg style="left:359px;top:411px;" width="14" height="21" viewBox="0 0 14 21"><path d="M0.5 0.5 L0.5 16.5 L4.2 13 L6.9 19 L9.4 17.9 L6.9 12 L12 12 Z" fill="#fff" stroke="#000" stroke-width="1" stroke-linejoin="miter"/></svg>
</body></html>
